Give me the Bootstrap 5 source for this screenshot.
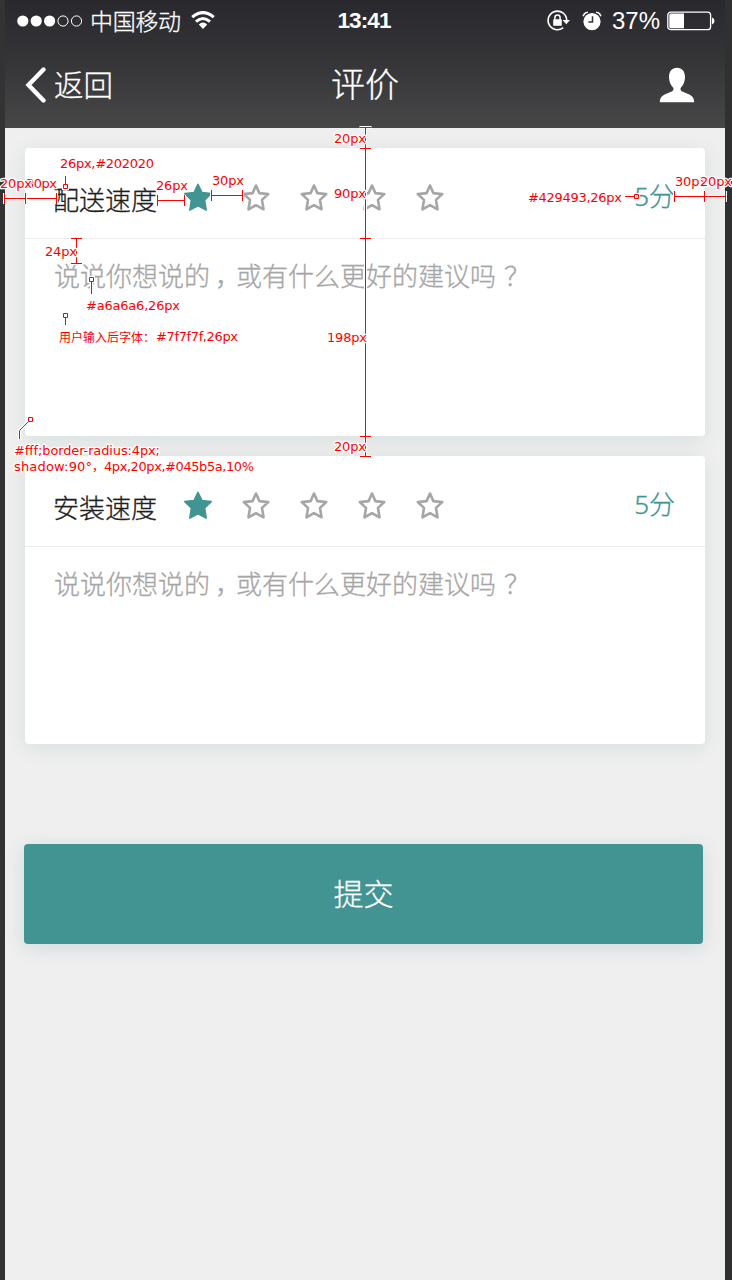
<!DOCTYPE html>
<html lang="zh-CN">
<head>
<meta charset="utf-8">
<meta name="viewport" content="width=device-width, initial-scale=1">
<title>评价</title>
<link href="https://cdn.jsdelivr.net/npm/bootstrap@5.3.0/dist/css/bootstrap.min.css" rel="stylesheet">
<style>
body{background:#333;font-family:"Liberation Sans","Noto Sans CJK SC",sans-serif;overflow:hidden}
.phone{width:732px;height:1280px;padding:0 7px 0 5px;background:linear-gradient(90deg,#333 50%,#2f3130 50%)}
.screen{background:#efefef;height:1280px}
.topbar{height:128px;background:linear-gradient(#29282d,#343336 45%,#474748);color:#fff}
.statusbar,.titlebar{display:grid;grid-template-columns:1fr auto 1fr;align-items:center}
.statusbar{height:42px;padding:0 10px 0 12px}
.titlebar{height:86px;padding:0 30px 0 20px}
.titlebar h1{margin:0 -5px 0 5px}
.cjk{font-family:"Noto Sans CJK SC",sans-serif;font-weight:300;-webkit-text-stroke:.3px currentColor}
.carrier{font-size:23px;line-height:30px;letter-spacing:-.3px;padding-bottom:3px}
.clock{font-size:22.5px;line-height:30px;font-weight:700;letter-spacing:-.9px;margin-left:-4px}
.percent{font-size:24px;line-height:30px}
.back{font-size:29.5px;line-height:40px;padding-bottom:4px}
.heading{font-size:34px;line-height:44px;padding-bottom:5px}
.review{height:288px;border:0;border-radius:4px;box-shadow:0 4px 20px rgba(4,91,90,.1)}
.review-head{height:90px;padding:0 30px 0 28px}
.topic{font-size:26px;line-height:40px;color:#202020;width:104px;margin-right:27px;padding-top:11px}
.score{font-size:26px;line-height:40px;color:#429493;font-family:"Noto Sans","Noto Sans CJK SC",sans-serif;padding-top:5px}
.stars{gap:30px;padding-top:8px}
.review-body{border-top:1px solid #ebebeb;padding:16px 29px;font-size:26px;line-height:40px;color:#a6a6a6}
.mid{display:inline-block;width:26px;text-indent:5px;vertical-align:top}
.submit{height:100px;width:679px;margin:80px 0 0 -1px;padding:4px 0 8px;border:0;border-radius:4px;background:#429493;color:#fff;font-size:30px;box-shadow:0 4px 20px rgba(4,91,90,.13)}
.notes{position:absolute;left:0;top:0;pointer-events:none}
.notes text{font-family:"DejaVu Sans","Noto Sans CJK SC",sans-serif;font-size:13px;fill:#f00;stroke:#fff;stroke-width:2.4px;paint-order:stroke;stroke-linejoin:round}
.halo{stroke:#fff;stroke-width:3;fill:none}
.line{stroke:#f00;stroke-width:1;fill:none}
</style>
</head>
<body>
<svg width="0" height="0" class="position-absolute">
<defs>
<path id="star-full" d="M14 1.2 L17.9 9.4 L27.2 10.6 L20.7 17 L22.2 27.1 L14 22.8 L5.8 27.1 L7.3 17 L.8 10.6 L10.1 9.4Z" fill="#429493" stroke="#429493" stroke-width="1.5" stroke-linejoin="round"/>
<path id="star-empty" d="M14 2.5 L17.4 10.1 L26.200 11.100 L20 16.900 L21.500 26.300 L14 22.200 L6.500 26.300 L8 16.900 L1.800 11.100 L10.600 10.100Z" fill="none" stroke="#a6a6a6" stroke-width="2.6" stroke-linejoin="round"/>
</defs>
</svg>
<div class="phone">
<div class="screen">
  <header class="topbar">
    <div class="statusbar">
      <div class="d-flex align-items-center">
        <svg width="66" height="12" viewBox="0 0 66 12"><g fill="#fff"><circle cx="5.8" cy="6" r="5.6"/><circle cx="19.2" cy="6" r="5.6"/><circle cx="32.6" cy="6" r="5.6"/></g><g fill="none" stroke="#fff"><circle cx="46" cy="6" r="5.1"/><circle cx="59.5" cy="6" r="5.1"/></g></svg>
        <span class="cjk carrier" style="margin-left:7px">中国移动</span>
        <svg style="margin:0 0 1px 10px" width="24" height="19" viewBox="0 0 24 19"><g fill="none" stroke="#fff" stroke-width="3"><path d="M1.2 6.2Q12-3 22.8 6.2"/><path d="M5 10.6Q12 4.3 19 10.6"/></g><path d="M7.8 13.5Q12 9.6 16.2 13.5L12 18Z" fill="#fff"/></svg>
      </div>
      <span class="clock">13:41</span>
      <div class="d-flex align-items-center justify-content-end">
        <svg width="24" height="22" viewBox="0 0 24 22"><path d="M16.2 17.7A9.3 9.3 0 1 1 19.7 10.5" fill="none" stroke="#fff" stroke-width="1.6"/><path d="M15.5 10h7.5l-3.7 4.2z" fill="#fff"/><rect x="6.2" y="9.3" width="8.6" height="6.5" rx=".6" fill="#fff"/><path d="M7.9 9.8V7.6a2.6 2.6 0 0 1 5.2 0v2.200" fill="none" stroke="#fff" stroke-width="1.5"/></svg>
        <svg style="margin-left:11px" width="20" height="20" viewBox="0 0 20 20"><circle cx="10" cy="10.6" r="8.6" fill="#fff"/><path d="M1.1 5.2Q2.2 1.6 5.9 1.3M18.9 5.2Q17.8 1.6 14.1 1.3" fill="none" stroke="#fff" stroke-width="1.6"/><path d="M10.5 5.2V11H6.4" fill="none" stroke="#343338" stroke-width="1.5"/></svg>
        <span class="percent" style="margin:0 7px 0 10px">37%</span>
        <svg width="48" height="20" viewBox="0 0 48 20"><rect x=".8" y="1.1" width="42.8" height="17.6" rx="3" fill="none" stroke="#fff" stroke-width="1.3"/><path d="M3.8 2.6H17V17.3H3.8Q2.3 17.3 2.3 15.8V4.1Q2.3 2.6 3.8 2.6Z" fill="#fff"/><path d="M45 6.5Q47.5 7.2 47.5 10T45 13.5Z" fill="#fff"/></svg>
      </div>
    </div>
    <nav class="titlebar">
      <a class="d-flex align-items-center text-white text-decoration-none" href="#">
        <svg width="23" height="36" viewBox="0 0 23 36"><path d="M18.5 2.5 3.5 18l15 15.5" fill="none" stroke="#fff" stroke-width="4.4" stroke-linecap="round"/></svg>
        <span class="cjk back" style="margin-left:6px">返回</span>
      </a>
      <h1 class="cjk heading">评价</h1>
      <svg class="ms-auto" width="36" height="36" viewBox="0 0 36 36"><path d="M18 .8C12.900.8 10 4.500 10 10c0 4.500 1.700 8.500 4.400 11 .5 3-1.500 3.400-4 4.500C5.500 27.800.8 28.500.8 35.200H35.200C35.200 28.500 30.500 27.800 25.600 25.500 23.100 24.400 21.100 24 21.600 21 24.300 18.500 26 14.500 26 10 26 4.500 23.100.8 18 .8Z" fill="#fff"/></svg>
    </nav>
  </header>

  <main class="d-flex flex-column" style="padding:20px 20px 0;gap:20px">
    <section class="card review">
      <div class="review-head d-flex align-items-center">
        <span class="cjk topic">配送速度</span>
        <div class="stars d-flex">
          <svg width="28" height="28"><use href="#star-full"/></svg>
          <svg width="28" height="28"><use href="#star-empty"/></svg>
          <svg width="28" height="28"><use href="#star-empty"/></svg>
          <svg width="28" height="28"><use href="#star-empty"/></svg>
          <svg width="28" height="28"><use href="#star-empty"/></svg>
        </div>
        <span class="cjk score ms-auto">5分</span>
      </div>
      <div class="cjk review-body text-nowrap">说说你想说的<span class="mid">，</span>或有什么更好的建议吗<span class="mid" style="text-indent:8px">？</span></div>
    </section>
    <section class="card review">
      <div class="review-head d-flex align-items-center">
        <span class="cjk topic">安装速度</span>
        <div class="stars d-flex">
          <svg width="28" height="28"><use href="#star-full"/></svg>
          <svg width="28" height="28"><use href="#star-empty"/></svg>
          <svg width="28" height="28"><use href="#star-empty"/></svg>
          <svg width="28" height="28"><use href="#star-empty"/></svg>
          <svg width="28" height="28"><use href="#star-empty"/></svg>
        </div>
        <span class="cjk score ms-auto">5分</span>
      </div>
      <div class="cjk review-body text-nowrap">说说你想说的<span class="mid">，</span>或有什么更好的建议吗<span class="mid" style="text-indent:8px">？</span></div>
    </section>
    <button class="btn submit cjk" type="button">提交</button>
  </main>
</div>
</div>

<!-- dimension notes drawn over the screen -->
<svg class="notes" width="732" height="1280" viewBox="0 0 732 1280">
  <defs>
    <path id="rules" d="M359.500 127.500h12M365.500 127.500V456.500M360 148.500h11M360 238.500h11M360 436.500h11M360 456.500h11
      M4.500 193v11M4.500 198.500H25.500M25.500 193v11M27 198.500H56.500M56.500 193v11
      M157.500 195v11M157.500 200.500H184.500M184.500 195v11M211.500 190v11M211.500 195.500H242.500M242.500 190v11
      M674.500 191v11M674.500 196.500H704.500M704.500 191v11M704.500 196.500H725.500M725.500 191v11
      M71 238.500h11M76.500 238.500V263.500M71 263.500h11"/>
    <path id="leaders" d="M65.500 176V184M63.500 184.500h4v4h-4zM625 196.500h9M634.500 194.500h4v4h-4zM89.500 277.500h4v4h-4zM91.500 282V294M63.500 313.500h4v4h-4zM65.500 318V325M28.500 417.500h4v4h-4zM28 422L19.500 430.500V439"/>
  </defs>
  <use href="#rules" class="halo"/><use href="#leaders" class="halo"/>
  <use href="#rules" class="line"/><use href="#leaders" class="line"/>
  <text x="334" y="143" textLength="32">20px</text>
  <text x="334" y="198" textLength="32">90px</text>
  <text x="327" y="342" textLength="40">198px</text>
  <text x="334" y="451" textLength="32">20px</text>
  <text x="26" y="188" textLength="31">30px</text>
  <text x="0" y="188" textLength="32">20px</text>
  <text x="60" y="168" textLength="94">26px,#202020</text>
  <text x="156" y="190" textLength="32">26px</text>
  <text x="212" y="185" textLength="32">30px</text>
  <text x="528" y="202" textLength="94">#429493,26px</text>
  <text x="675" y="186" textLength="32">30px</text>
  <text x="700" y="186" textLength="32">20px</text>
  <text x="45" y="256" textLength="32">24px</text>
  <text x="86" y="310" textLength="94">#a6a6a6,26px</text>
  <text x="59" y="342" style="font-size:12px">用户输入后字体：</text>
  <text x="156" y="341" textLength="82">#7f7f7f,26px</text>
  <text x="14" y="455" textLength="146">#fff;border-radius:4px;</text>
  <text x="14" y="471" textLength="78">shadow:90°</text><text x="92" y="471" style="font-size:12px">，</text><text x="104" y="471" textLength="150">4px,20px,#045b5a,10%</text>
</svg>
<script src="https://cdn.jsdelivr.net/npm/bootstrap@5.3.0/dist/js/bootstrap.bundle.min.js"></script>
</body>
</html>
